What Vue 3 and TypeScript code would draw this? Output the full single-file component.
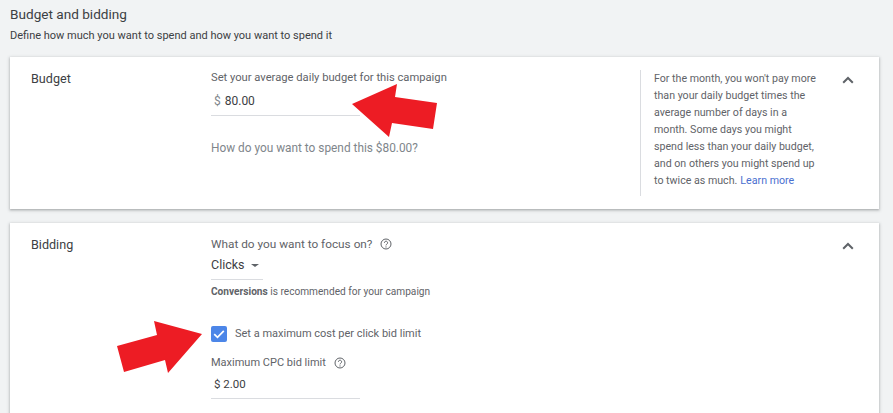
<script setup lang="ts">
const helpLines: string[] = [
  "For the month, you won't pay more",
  "than your daily budget times the",
  "average number of days in a",
  "month. Some days you might",
  "spend less than your daily budget,",
  "and on others you might spend up",
];
</script>

<template>
  <div class="page">
    <header class="head">
      <h1>Budget and bidding</h1>
      <p>Define how much you want to spend and how you want to spend it</p>
    </header>

    <section class="card budget">
      <h2>Budget</h2>
      <div class="main">
        <div class="label set">Set your average daily budget for this campaign</div>
        <div class="field amount"><span class="cur">$</span> 80.00</div>
        <div class="question">How do you want to spend this $80.00?</div>
      </div>
      <aside class="help">
        <div v-for="line in helpLines" :key="line" class="help-line">{{ line }}</div>
        <div class="help-line last"><span>to twice as much.</span><a>Learn more</a></div>
      </aside>
      <svg class="chev" viewBox="0 0 12 8" width="12" height="8"><path d="M1.2 6.8 6 2l4.8 4.8" fill="none" stroke="#5f6368" stroke-width="2" /></svg>
    </section>

    <section class="card bidding">
      <h2>Bidding</h2>
      <div class="main">
        <div class="label q focus">What do you want to focus on?
          <svg class="qm" viewBox="0 0 12 12" width="12" height="12"><circle cx="6" cy="6" r="5" fill="none" stroke="#5f6368" /><path d="M4.4 4.8a1.6 1.6 0 1 1 2.5 1.3C6.3 6.5 6 6.8 6 7.4" fill="none" stroke="#5f6368" /><circle cx="6" cy="8.9" r=".6" fill="#5f6368" /></svg>
        </div>
        <div class="select">Clicks <i class="caret"></i></div>
        <div class="note"><b>Conversions</b> is recommended for your campaign</div>
        <label class="check">
          <span class="box"><svg viewBox="0 0 16 16" width="16" height="16"><path d="M3.2 8.2 6.5 11.4 12.8 4.8" fill="none" stroke="#fff" stroke-width="1.7" /></svg></span>
          Set a maximum cost per click bid limit
        </label>
        <div class="label q cpc">Maximum CPC bid limit
          <svg class="qm" viewBox="0 0 12 12" width="12" height="12"><circle cx="6" cy="6" r="5" fill="none" stroke="#5f6368" /><path d="M4.4 4.8a1.6 1.6 0 1 1 2.5 1.3C6.3 6.5 6 6.8 6 7.4" fill="none" stroke="#5f6368" /><circle cx="6" cy="8.9" r=".6" fill="#5f6368" /></svg>
        </div>
        <div class="field limit">$ 2.00</div>
      </div>
      <svg class="chev" viewBox="0 0 12 8" width="12" height="8"><path d="M1.2 6.8 6 2l4.8 4.8" fill="none" stroke="#5f6368" stroke-width="2" /></svg>
    </section>

    <svg class="arrows" width="893" height="413" viewBox="0 0 893 413">
      <polygon points="352,104 397,84 395,97 437,103 433,129 392,123 389,137" fill="#ed1c24" />
      <polygon points="202,334 154,321 157,335 117,346 124,372 165,360 168,373" fill="#ed1c24" />
    </svg>
  </div>
</template>

<style>
html, body { margin: 0; background: #f1f3f4; overflow: hidden; }
</style>

<style scoped>
.page {
  position: relative;
  width: 893px;
  height: 413px;
  overflow: hidden;
  box-sizing: border-box;
  padding: 0 14px 0 10px;
  background: #f1f3f4;
  font-family: Roboto, "Liberation Sans", sans-serif;
  color: #3c4043;
}
.head { height: 57px; }
.head h1 { margin: 0; padding-top: 5px; font-size: 13.6px; line-height: 18px; font-weight: 400; color: #3c4043; }
.head p { margin: 5px 0 0; font-size: 11px; line-height: 16px; color: #3c4043; }
.card {
  display: flex;
  background: #fff;
  box-shadow: 0 1px 2px rgba(60,64,67,.3), 0 1px 3px 1px rgba(60,64,67,.15);
  position: relative;
}
.budget { height: 152px; margin-bottom: 14px; }
.bidding { height: 200px; }
.card h2 {
  width: 180px;
  margin: 0 0 0 21px;
  padding-top: 14px;
  font-size: 12.6px;
  line-height: 16px;
  font-weight: 400;
  color: #3c4043;
}
.main { width: 429px; padding-top: 14px; }
.label { font-size: 11px; line-height: 14px; color: #5f6368; }
.set { font-size: 11.2px; }
.focus { font-size: 11.8px; }
.field { width: 149px; box-sizing: border-box; border-bottom: 1px solid #dadce0; color: #3c4043; }
.amount { margin-top: 6px; padding: 0 0 6px 3px; height: 25px; font-size: 12px; line-height: 20px; }
.cur { color: #80868b; margin-right: 1px; }
.question { margin-top: 24px; font-size: 11.85px; line-height: 16px; color: #80868b; }
.help { width: 177px; height: 126px; margin-top: 13px; padding-left: 13px; border-left: 1px solid #dadce0; box-sizing: border-box; }
.help-line { font-size: 10.65px; line-height: 17px; color: #5f6368; white-space: nowrap; }
.last { display: flex; gap: 3px; }
.help a { color: #4a6fd0; }
.chev { position: absolute; right: 25px; top: 19px; }
.q { display: flex; align-items: center; gap: 8px; }
.select {
  margin-top: 6px;
  width: 52px;
  height: 22px;
  border-bottom: 1px solid #dadce0;
  font-size: 12.5px;
  line-height: 16px;
  color: #3c4043;
}
.caret { display: inline-block; margin-left: 3px; vertical-align: 2px; border: 4px solid transparent; border-top: 3px solid #5f6368; border-bottom: 0; }
.note { margin-top: 5px; font-size: 10.15px; line-height: 14px; color: #5f6368; }
.note b { font-weight: 700; }
.check { display: flex; align-items: center; gap: 8px; margin-top: 27px; font-size: 11px; line-height: 16px; color: #5f6368; }
.box { width: 16px; height: 16px; border-radius: 2px; background: #4c86e8; display: block; }
.box svg { display: block; }
.cpc { margin-top: 14px; }
.limit { margin-top: 7px; padding: 0 0 6px 3px; font-size: 11.5px; line-height: 15px; }
.arrows { position: absolute; left: 0; top: 0; pointer-events: none; }
</style>
